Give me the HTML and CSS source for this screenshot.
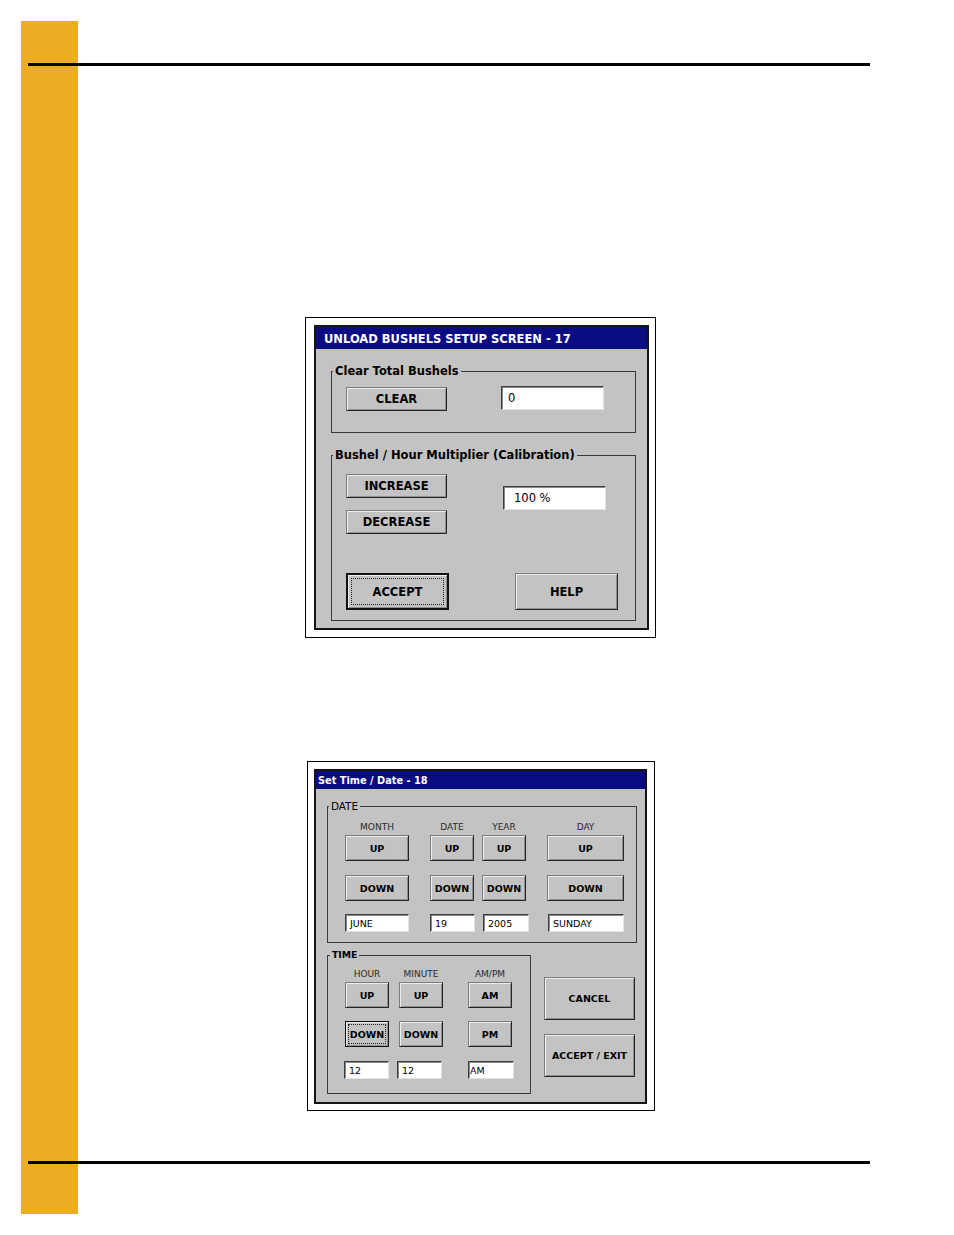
FILE: index.html
```html
<!DOCTYPE html>
<html lang="en">
<head>
<meta charset="utf-8">
<title>Unload Bushels Setup / Set Time Date</title>
<link rel="stylesheet" href="styles.css">
</head>
<body>
<div class="page">
  <div class="bar"></div>
  <div class="rule rule-top"></div>
  <main class="content">
    <div class="frame frame-unload">
      <div class="screen">
        <div class="titlebar tb-unload">UNLOAD BUSHELS SETUP SCREEN - 17</div>
        <div class="screen-body sb-unload">
          <fieldset class="group g-clear">
            <legend class="legend-lg">Clear Total Bushels</legend>
            <div class="row-clear">
              <button class="btn btn-lg b-clear">CLEAR</button>
              <div class="tbox tbox-lg tb-zero">0</div>
            </div>
          </fieldset>
          <fieldset class="group g-mult">
            <legend class="legend-lg">Bushel / Hour Multiplier (Calibration)</legend>
            <div class="mult-top">
              <div class="stack">
                <button class="btn btn-lg b-wide">INCREASE</button>
                <button class="btn btn-lg b-wide">DECREASE</button>
              </div>
              <div class="tbox tbox-lg tb-pct">100 %</div>
            </div>
            <div class="mult-bottom">
              <button class="btn btn-lg btn-default b-big"><span class="focus">ACCEPT</span></button>
              <button class="btn btn-lg b-big b-help">HELP</button>
            </div>
          </fieldset>
        </div>
      </div>
    </div>

    <div class="frame frame-time">
      <div class="screen">
        <div class="titlebar tb-time">Set Time / Date - 18</div>
        <div class="screen-body sb-time">
          <fieldset class="group g-date">
            <legend class="legend-sm legend-date">DATE</legend>
            <div class="cols date-cols">
              <div class="col c-month">
                <div class="lbl">MONTH</div>
                <button class="btn btn-sm b-up">UP</button>
                <button class="btn btn-sm b-down">DOWN</button>
                <div class="tbox tbox-sm t-month">JUNE</div>
              </div>
              <div class="col c-date">
                <div class="lbl">DATE</div>
                <button class="btn btn-sm b-up">UP</button>
                <button class="btn btn-sm b-down">DOWN</button>
                <div class="tbox tbox-sm t-date">19</div>
              </div>
              <div class="col c-year">
                <div class="lbl">YEAR</div>
                <button class="btn btn-sm b-up">UP</button>
                <button class="btn btn-sm b-down">DOWN</button>
                <div class="tbox tbox-sm t-year">2005</div>
              </div>
              <div class="col c-day">
                <div class="lbl">DAY</div>
                <button class="btn btn-sm b-up">UP</button>
                <button class="btn btn-sm b-down">DOWN</button>
                <div class="tbox tbox-sm t-day">SUNDAY</div>
              </div>
            </div>
          </fieldset>
          <div class="time-row">
            <fieldset class="group g-time">
              <legend class="legend-sm legend-time">TIME</legend>
              <div class="cols time-cols">
                <div class="col c-hour">
                  <div class="lbl">HOUR</div>
                  <button class="btn btn-sm b-up">UP</button>
                  <button class="btn btn-sm btn-default btn-default-sm b-tdown"><span class="focus">DOWN</span></button>
                  <div class="tbox tbox-sm t-hour">12</div>
                </div>
                <div class="col c-minute">
                  <div class="lbl">MINUTE</div>
                  <button class="btn btn-sm b-up">UP</button>
                  <button class="btn btn-sm b-tdown">DOWN</button>
                  <div class="tbox tbox-sm t-minute">12</div>
                </div>
                <div class="col c-ampm">
                  <div class="lbl">AM/PM</div>
                  <button class="btn btn-sm b-up">AM</button>
                  <button class="btn btn-sm b-tdown">PM</button>
                  <div class="tbox tbox-sm t-ampm">AM</div>
                </div>
              </div>
            </fieldset>
            <div class="actions">
              <button class="btn btn-sm b-action">CANCEL</button>
              <button class="btn btn-sm b-action b-exit">ACCEPT / EXIT</button>
            </div>
          </div>
        </div>
      </div>
    </div>
  </main>
  <div class="rule rule-bottom"></div>
</div>
</body>
</html>
```
FILE: styles.css
```css
* { box-sizing: border-box; }

body {
  margin: 0;
  background: #fff;
  font-family: "DejaVu Sans", Verdana, sans-serif;
  color: #000;
}

.page {
  display: grid;
  margin: 21px 0 0 21px;
  grid-template-columns: 7px 50px 792px;
  grid-template-rows: 42px 3px 1095px 3px 50px;
}

.bar {
  grid-column: 1 / 3;
  grid-row: 1 / 6;
  background: #ecad24;
}

.rule {
  grid-column: 2 / 4;
  background: #000;
  position: relative;
  z-index: 1;
}
.rule-top { grid-row: 2; }
.rule-bottom { grid-row: 4; }

.content {
  grid-column: 3;
  grid-row: 3;
  display: flex;
  flex-direction: column;
  align-items: flex-start;
  padding-top: 251px;
}

/* dialog frames */
.frame {
  display: flex;
  border: 1px solid #000;
  background: #fff;
}
.frame-unload {
  width: 351px;
  height: 321px;
  margin-left: 227px;
  padding: 7px 6px 7px 8px;
}
.frame-time {
  width: 348px;
  height: 350px;
  margin-left: 229px;
  margin-top: 123px;
  padding: 7px 7px 6px 6px;
}

.screen {
  flex: 1;
  display: flex;
  flex-direction: column;
  border: 2px solid #141414;
  background: #c3c3c3;
}

.titlebar {
  display: flex;
  align-items: center;
  background: #0b0b82;
  color: #fff;
  font-weight: bold;
  white-space: nowrap;
}
.tb-unload { height: 22px; font-size: 11.5px; padding-left: 8px; padding-top: 1px; }
.tb-time { height: 18px; font-size: 9.8px; padding-left: 2px; }

.screen-body { display: flex; flex-direction: column; align-items: flex-start; }
.sb-unload { padding: 15px 11px 0 15px; }
.sb-time { padding: 11px 8px 0 11px; }

/* group boxes */
.group {
  margin: 0;
  padding: 0;
  border: 1px solid #3a3a3a;
  min-width: 0;
}
.group legend {
  padding: 0 2px;
  margin-left: 1px;
  white-space: nowrap;
}
.legend-lg { font-size: 11.5px; font-weight: bold; line-height: 14px; }
.group .legend-lg { margin-left: -13px; }
.legend-sm { line-height: 12px; }
.legend-date { font-size: 10.4px; }
.group .legend-time { font-size: 9.3px; font-weight: bold; margin-left: 2px; }

.g-clear { width: 305px; padding: 8px 0 21px 14px; }
.g-mult { width: 305px; margin-top: 15px; padding: 12px 0 10px 14px; }

.row-clear { display: flex; align-items: flex-start; }
.mult-top { display: flex; align-items: flex-start; }
.stack { display: flex; flex-direction: column; gap: 12px; }
.mult-bottom { display: flex; margin-top: 39px; }

/* buttons */
.btn {
  display: flex;
  align-items: center;
  justify-content: center;
  padding: 0;
  margin: 0;
  font-family: inherit;
  font-weight: bold;
  color: #000;
  background: #c3c3c3;
  border: 1px solid #7c7c7c;
  border-right-color: #262626;
  border-bottom-color: #262626;
  box-shadow: inset 1px 1px #ededed, inset -1px -1px #8e8e8e;
  white-space: nowrap;
}
.btn-lg { font-size: 11.5px; }
.btn-sm { font-size: 9.5px; }

.btn-default {
  border: 2px solid #111;
  padding: 3px;
  box-shadow: inset 1px 1px #ededed, inset -1px -1px #8e8e8e;
}
.btn-default-sm { border-width: 1px; padding: 2px; }
.focus {
  flex: 1;
  align-self: stretch;
  display: flex;
  align-items: center;
  justify-content: center;
  border: 1px dotted #222;
}

.b-clear { width: 101px; height: 24px; margin-top: 1px; }
.b-wide { width: 101px; height: 24px; }
.b-big { width: 103px; height: 37px; }
.b-help { margin-left: 66px; }

/* text boxes */
.tbox {
  display: flex;
  align-items: center;
  background: #fff;
  border: 1px solid;
  border-color: #3c3c3c #e4e4e4 #e4e4e4 #3c3c3c;
  box-shadow: inset 1px 1px #8a8a8a;
  white-space: nowrap;
}
.tbox-lg { width: 103px; height: 24px; font-size: 11.5px; padding-left: 6px; }
.tb-zero { margin-left: 54px; }
.tb-pct { margin-left: 56px; margin-top: 12px; padding-left: 10px; }
.tbox-sm { height: 18px; font-size: 9.5px; padding-left: 4px; margin-top: 13px; }

/* date / time columns */
.cols { display: flex; align-items: flex-start; }
.date-cols { padding: 10px 0 10px 17px; }
.time-cols { padding: 8px 0 14px 17px; }

.col { display: flex; flex-direction: column; align-items: flex-start; }
.lbl {
  align-self: stretch;
  text-align: center;
  font-size: 9px;
  line-height: 11px;
  color: #2a2a2a;
  white-space: nowrap;
}
.b-up { width: 100%; height: 26px; margin-top: 2px; }
.b-down { width: 100%; height: 26px; margin-top: 14px; }
.b-tdown { width: 100%; height: 26px; margin-top: 13px; }

.g-date { width: 310px; }
.c-month { width: 64px; }
.c-date { width: 44px; margin-left: 21px; }
.c-year { width: 44px; margin-left: 8px; }
.c-day { width: 77px; margin-left: 21px; }
.t-month { width: 64px; }
.t-date { width: 45px; }
.t-year { width: 46px; margin-left: 1px; }
.t-day { width: 76px; margin-left: 1px; }

.time-row { display: flex; align-items: flex-start; margin-top: 6px; }
.g-time { width: 204px; }
.c-hour { width: 44px; }
.c-minute { width: 44px; margin-left: 10px; }
.c-ampm { width: 44px; margin-left: 25px; }
.time-cols .tbox-sm { margin-top: 14px; }
.t-hour { width: 45px; margin-left: -1px; }
.t-minute { width: 45px; margin-left: -2px; }
.t-ampm { width: 46px; padding-left: 1px; }

.actions { display: flex; flex-direction: column; margin-left: 13px; margin-top: 28px; }
.b-action { width: 91px; height: 43px; }
.b-exit { margin-top: 14px; }
```
